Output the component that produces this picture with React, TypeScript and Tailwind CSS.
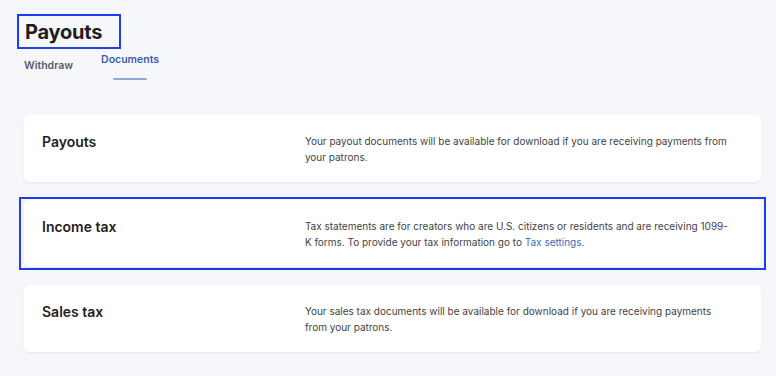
const rows = [
  {
    title: "Payouts",
    body: (
      <>
        Your payout documents will be available for download if you are
        receiving payments from your patrons.
      </>
    ),
    focused: false,
  },
  {
    title: "Income tax",
    body: (
      <>
        Tax statements are for creators who are U.S. citizens or residents and
        are receiving 1099-K forms. To provide your tax information go to{" "}
        <a href="#" className="text-[#3d69b8]">
          Tax settings
        </a>
        .
      </>
    ),
    focused: true,
  },
  {
    title: "Sales tax",
    body: (
      <>
        Your sales tax documents will be available for download if you are
        receiving payments from your patrons.
      </>
    ),
    focused: false,
  },
];

export default function App() {
  return (
    <div className="min-h-screen bg-[#f6f7fb] font-['Inter',sans-serif] text-[#1f1e1c]">
      <div className="pl-[17px] pt-[14px]">
        <h1 className="flex h-[35px] w-[104px] items-center border-2 border-[#1f3cf5] pl-[6px] text-[20px] font-bold tracking-[-0.2px]">
          Payouts
        </h1>
      </div>

      <div className="mt-[3px] flex gap-[28px] pl-[24px] text-[10.5px] font-semibold">
        <button className="text-[#5b5b66]">Withdraw</button>
        <button className="flex flex-col items-center text-[#3b5fa9]">
          <span>Documents</span>
          <span className="mt-[10px] h-[2px] w-[34px] rounded-full bg-[#8eaad8]" />
        </button>
      </div>

      <div className="mt-[35px] flex flex-col gap-[18px] pl-[24px] pr-[15px]">
        {rows.map((row) => (
          <div
            key={row.title}
            className={
              row.focused
                ? "-mx-[5px] -my-[3px] border-2 border-[#1f3cf5] px-[3px] py-[1px]"
                : ""
            }
          >
            <div className="grid h-[67px] grid-cols-8 items-start rounded-md bg-white px-[18px] pt-[18px] shadow-[0_1px_2px_rgba(0,0,0,0.08)]">
              <div className="col-span-3 text-[14px] leading-[17px] font-semibold">
                {row.title}
              </div>
              <p className="col-span-5 pr-[9px] text-[10px] leading-[16px] text-[#3f3f44]">
                {row.body}
              </p>
            </div>
          </div>
        ))}
      </div>
    </div>
  );
}
